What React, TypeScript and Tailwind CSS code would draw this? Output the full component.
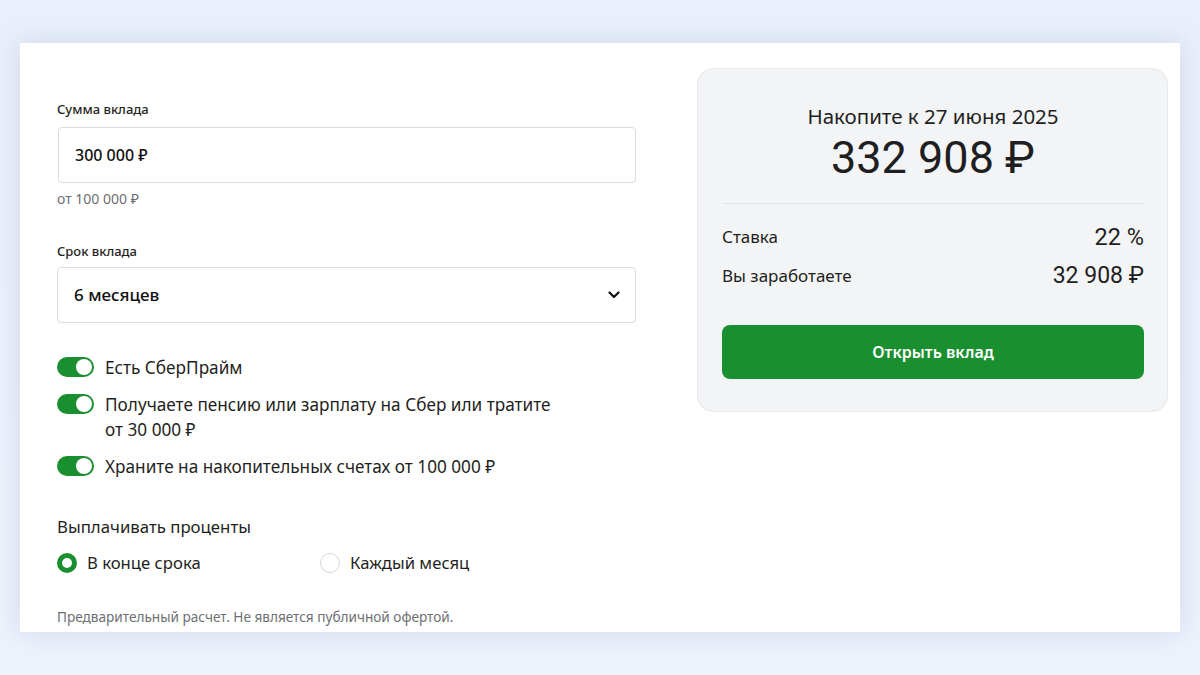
import React, { useState } from "react";

const GREEN = "bg-[#1a8f2f]";

function Toggle({ on, onClick }: { on: boolean; onClick: () => void }) {
  return (
    <button
      onClick={onClick}
      className={`relative mt-[2px] h-[20px] w-[37px] shrink-0 rounded-full ${on ? GREEN : "bg-[#c7c7c7]"}`}
    >
      <span
        className={`absolute top-[2px] h-[16px] w-[16px] rounded-full bg-white ${on ? "left-[19px]" : "left-[2px]"}`}
      />
    </button>
  );
}

function Radio({ checked, label, onClick }: { checked: boolean; label: string; onClick: () => void }) {
  return (
    <label onClick={onClick} className="flex cursor-pointer items-center gap-[10px]">
      <span
        className={`h-[20px] w-[20px] rounded-full bg-white ${checked ? "border-[5px] border-[#1a8f2f]" : "border border-[#d6d6d6]"}`}
      />
      <span className="text-[16.7px] text-[#1f1f22]">{label}</span>
    </label>
  );
}

export default function App() {
  const [toggles, setToggles] = useState([true, true, true]);
  const [payout, setPayout] = useState<"end" | "month">("end");

  const toggleLabels = [
    "Есть СберПрайм",
    "Получаете пенсию или зарплату на Сбер или тратите от 30 000 ₽",
    "Храните на накопительных счетах от 100 000 ₽",
  ];

  return (
    <div
      className="h-[675px] w-[1200px] overflow-hidden bg-gradient-to-b from-[#eaf0fb] to-[#eef2fc] px-[20px] pt-[43px]"
      style={{ fontFamily: '"Noto Sans", "Open Sans", sans-serif' }}
    >
      <div className="flex h-[589px] bg-white pl-[37px] pr-[12px] pt-[25px] shadow-[0_0_24px_rgba(120,140,180,0.25)]">
        {/* left: form */}
        <div className="w-[579px] shrink-0 pt-[32px]">
          <div className="text-[13px] font-medium leading-[18px] text-[#1f1f22]">Сумма вклада</div>
          <div className="mt-[9px] ml-[1px] flex h-[56px] items-center rounded-[4px] border border-[#dcdcdc] px-[16px] text-[16px] font-medium text-[#111]">
            300 000 ₽
          </div>
          <div className="mt-[7px] text-[14px] leading-[18px] text-[#6e6e73]">от 100 000 ₽</div>

          <div className="mt-[34px] text-[13px] font-medium leading-[18px] text-[#1f1f22]">Срок вклада</div>
          <div className="mt-[7px] flex h-[56px] items-center justify-between rounded-[4px] border border-[#dcdcdc] pl-[16px] pr-[15px] text-[17px] font-medium text-[#111]">
            <span>6 месяцев</span>
            <svg width="12" height="8" viewBox="0 0 12 8" fill="none">
              <path d="M1.5 1.5 6 6l4.5-4.5" stroke="#111" strokeWidth="2.2" strokeLinecap="round" strokeLinejoin="round" />
            </svg>
          </div>

          <div className="mt-[32px] flex flex-col gap-[12px]">
            {toggleLabels.map((t, i) => (
              <div key={i} className="flex items-start gap-[11px]">
                <Toggle
                  on={toggles[i]}
                  onClick={() => setToggles(toggles.map((v, j) => (j === i ? !v : v)))}
                />
                <span className="max-w-[458px] text-[17.2px] leading-[25px] text-[#1f1f22]">{t}</span>
              </div>
            ))}
          </div>

          <div className="mt-[36px] text-[16.8px] leading-[24px] text-[#1f1f22]">Выплачивать проценты</div>
          <div className="mt-[11px] flex">
            <div className="w-[263px]">
              <Radio checked={payout === "end"} label="В конце срока" onClick={() => setPayout("end")} />
            </div>
            <Radio checked={payout === "month"} label="Каждый месяц" onClick={() => setPayout("month")} />
          </div>

          <div className="mt-[33px] text-[13.6px] leading-[18px] text-[#6e6e73]">
            Предварительный расчет. Не является публичной офертой.
          </div>
        </div>

        {/* right: summary */}
        <div className="ml-[61px] h-[344px] flex-1 rounded-[16px] border border-[#e6e8ec] bg-[#f3f4f6] pl-[24px] pr-[23px] pt-[33px]">
          <div className="text-center text-[20.5px] leading-[28px] text-[#1f1f22]">Накопите к 27 июня 2025</div>
          <div
            className="mt-[2px] text-center text-[45px] leading-[52px] text-[#1f1f22]"
            style={{ fontFamily: "Roboto, sans-serif" }}
          >
            332 908 ₽
          </div>
          <div className="mt-[19px] h-px bg-[#e2e4e8]" />
          <div className="mt-[19px] flex items-center justify-between leading-[28px]">
            <span className="text-[17px] text-[#1f1f22]">Ставка</span>
            <span className="text-[23.5px] text-[#1f1f22]" style={{ fontFamily: "Roboto, sans-serif" }}>
              22 %
            </span>
          </div>
          <div className="mt-[11px] flex items-center justify-between leading-[28px]">
            <span className="text-[17px] text-[#1f1f22]">Вы заработаете</span>
            <span className="text-[23px] text-[#1f1f22]" style={{ fontFamily: "Roboto, sans-serif" }}>
              32 908 ₽
            </span>
          </div>
          <button className={`mt-[35px] h-[54px] w-full rounded-[8px] ${GREEN} text-[16px] font-semibold text-white`}>
            Открыть вклад
          </button>
        </div>
      </div>
    </div>
  );
}
